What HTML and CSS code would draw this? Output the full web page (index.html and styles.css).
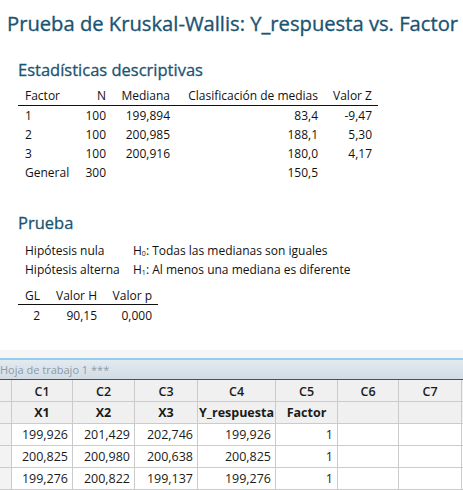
FILE: index.html
```html
<!DOCTYPE html>
<html lang="es">
<head>
<meta charset="utf-8">
<title>Prueba de Kruskal-Wallis</title>
<link rel="stylesheet" href="styles.css">
</head>
<body>
<div class="report">
  <h1 class="title">Prueba de Kruskal-Wallis: Y_respuesta vs. Factor</h1>

  <h2 class="section">Estadísticas descriptivas</h2>
  <table class="stats desc">
    <colgroup>
      <col class="d1"><col class="d2"><col class="d3"><col class="d4"><col class="d5">
    </colgroup>
    <thead>
      <tr><th class="left">Factor</th><th>N</th><th>Mediana</th><th>Clasificación de medias</th><th>Valor Z</th></tr>
    </thead>
    <tbody>
      <tr><td class="left">1</td><td>100</td><td>199,894</td><td>83,4</td><td>-9,47</td></tr>
      <tr><td class="left">2</td><td>100</td><td>200,985</td><td>188,1</td><td>5,30</td></tr>
      <tr><td class="left">3</td><td>100</td><td>200,916</td><td>180,0</td><td>4,17</td></tr>
      <tr><td class="left">General</td><td>300</td><td></td><td>150,5</td><td></td></tr>
    </tbody>
  </table>

  <h2 class="section section-test">Prueba</h2>
  <div class="hypo">
    <div class="hypo-row"><span class="hypo-label">Hipótesis nula</span><span>H<sub>0</sub>: Todas las medianas son iguales</span></div>
    <div class="hypo-row"><span class="hypo-label">Hipótesis alterna</span><span>H<sub>1</sub>: Al menos una mediana es diferente</span></div>
  </div>
  <table class="stats test">
    <colgroup>
      <col class="t1"><col class="t2"><col class="t3">
    </colgroup>
    <thead>
      <tr><th>GL</th><th>Valor H</th><th>Valor p</th></tr>
    </thead>
    <tbody>
      <tr><td>2</td><td>90,15</td><td>0,000</td></tr>
    </tbody>
  </table>
</div>

<div class="worksheet">
  <div class="ws-top"></div>
  <div class="ws-titlebar"><span class="ws-title">Hoja de trabajo 1 ***</span></div>
  <div class="grid">
    <div class="cell rh"></div><div class="cell colhead">C1</div><div class="cell colhead">C2</div><div class="cell colhead">C3</div><div class="cell colhead">C4</div><div class="cell colhead">C5</div><div class="cell colhead">C6</div><div class="cell colhead">C7</div><div class="cell rh"></div>
    <div class="cell rh"></div><div class="cell name">X1</div><div class="cell name">X2</div><div class="cell name">X3</div><div class="cell name">Y_respuesta</div><div class="cell name">Factor</div><div class="cell name"></div><div class="cell name"></div><div class="cell rh"></div>
    <div class="cell rn"></div><div class="cell num">199,926</div><div class="cell num">201,429</div><div class="cell num">202,746</div><div class="cell num">199,926</div><div class="cell num">1</div><div class="cell"></div><div class="cell"></div><div class="cell"></div>
    <div class="cell rn"></div><div class="cell num">200,825</div><div class="cell num">200,980</div><div class="cell num">200,638</div><div class="cell num">200,825</div><div class="cell num">1</div><div class="cell"></div><div class="cell"></div><div class="cell"></div>
    <div class="cell rn"></div><div class="cell num">199,276</div><div class="cell num">200,822</div><div class="cell num">199,137</div><div class="cell num">199,276</div><div class="cell num">1</div><div class="cell"></div><div class="cell"></div><div class="cell"></div>
  </div>
</div>
</body>
</html>
```

FILE: styles.css
```css
html, body {
  margin: 0;
  padding: 0;
  background: #ffffff;
}
body {
  width: 463px;
  height: 490px;
  overflow: hidden;
  font-family: "Open Sans", "Noto Sans", sans-serif;
  color: #111111;
}
.report {
  padding: 9px 0 0 7px;
  height: 350px;
  box-sizing: border-box;
}
.title {
  margin: 0;
  font-weight: 400;
  font-size: 20.2px;
  line-height: 28px;
  color: #1b5472;
  -webkit-text-stroke: 0.35px #1b5472;
  white-space: nowrap;
}
.section {
  margin: 22px 0 0 11px;
  font-weight: 400;
  font-size: 16.5px;
  line-height: 22px;
  color: #1b5472;
  -webkit-text-stroke: 0.3px #1b5472;
}
.section-test {
  margin-top: 30px;
}
.stats {
  border-collapse: collapse;
  table-layout: fixed;
  margin-left: 11px;
  font-size: 12px;
}
.stats th, .stats td {
  padding: 0;
  text-align: right;
  font-weight: 400;
  white-space: nowrap;
  height: 19px;
  line-height: 19px;
}
.stats thead th {
  border-bottom: 1.5px solid #111;
  height: 18px;
  line-height: 18px;
}
.stats .left {
  text-align: left;
  padding-left: 7px;
}
.desc { margin-top: 6px; width: 360px; }
.d1 { width: 62px; }
.d2 { width: 26px; }
.d3 { width: 64px; }
.d4 { width: 148px; }
.d5 { width: 60px; }
.desc th:last-child, .desc td:last-child { padding-right: 6px; }

.hypo {
  margin: 7px 0 0 18px;
  font-size: 12px;
}
.hypo-row {
  display: flex;
  height: 19px;
  line-height: 19px;
}
.hypo-label {
  width: 108px;
  flex: none;
}
.hypo sub {
  font-size: 7px;
  vertical-align: -1px;
  line-height: 0;
}
.test { margin-top: 8px; width: 140px; }
.test thead th { height: 17px; line-height: 17px; }
.test tbody td { height: 18px; line-height: 21px; }
.t1 { width: 22px; }
.t2 { width: 57px; }
.t3 { width: 61px; }
.test th:last-child, .test td:last-child { padding-right: 6px; }

.worksheet {
  height: 140px;
}
.ws-top {
  height: 8px;
  background: #f6f6f6;
  border-bottom: 2px solid #93cdee;
}
.ws-titlebar {
  height: 19px;
  background: linear-gradient(#e3eaf0, #d2dce5);
  border-bottom: 1px solid #505050;
  overflow: hidden;
}
.ws-title {
  display: block;
  margin-left: 0;
  font-size: 11px;
  line-height: 19px;
  color: #8e9aa6;
  white-space: nowrap;
}
.grid {
  display: grid;
  grid-template-columns: 11px 60px 61px 62px 77px 61px 60px 62px 1fr;
  grid-auto-rows: 21px;
  gap: 1px;
  background: #cbcbcb;
  border-bottom: 1px solid #cbcbcb;
}
.cell {
  background: #ffffff;
  font-size: 12.5px;
  line-height: 22px;
  white-space: nowrap;
  overflow: hidden;
  color: #1a1a1a;
}
.cell.rh, .cell.colhead, .cell.name {
  background: #f0f0f0;
}
.cell.rn {
  background: #f3f3f3;
}
.colhead {
  text-align: center;
  font-weight: 600;
  line-height: 24px;
}
.name {
  text-align: center;
  font-weight: 700;
}
.num {
  text-align: right;
  padding-right: 4px;
}
```
